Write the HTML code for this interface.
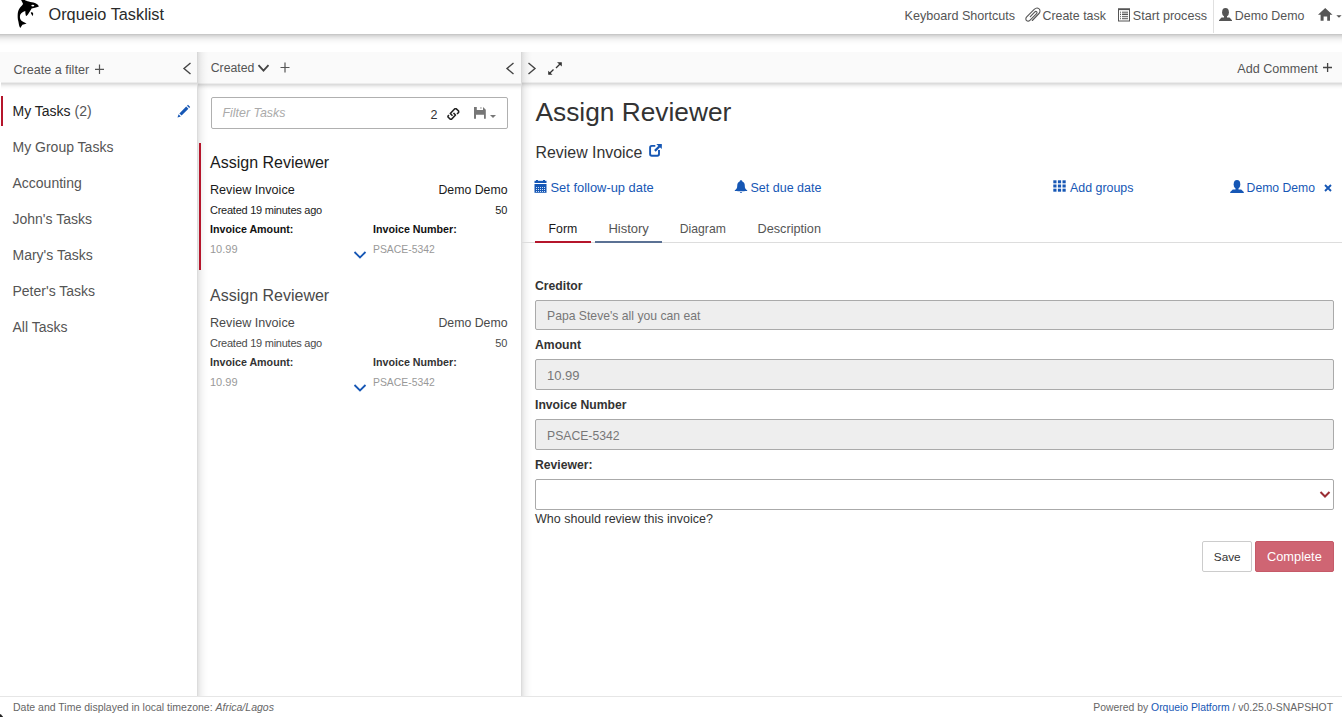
<!DOCTYPE html>
<html><head><meta charset="utf-8"><title>Orqueio Tasklist</title>
<style>
html,body{margin:0;padding:0;}
body{width:1342px;height:717px;position:relative;overflow:hidden;background:#fff;font-family:"Liberation Sans",sans-serif;}
.t{position:absolute;white-space:nowrap;line-height:1;}
svg{display:block;}
</style></head><body>
<div style="position:absolute;left:0px;top:0px;width:1342px;height:34px;background:#fff;"></div>
<div style="position:absolute;left:0px;top:34px;width:1342px;height:11px;background:linear-gradient(180deg,rgba(0,0,0,0.216) 0px 1px,rgba(0,0,0,0.165) 1px 2px,rgba(0,0,0,0.129) 2px 3px,rgba(0,0,0,0.098) 3px 4px,rgba(0,0,0,0.075) 4px 5px,rgba(0,0,0,0.051) 5px 6px,rgba(0,0,0,0.035) 6px 7px,rgba(0,0,0,0.024) 7px 8px,rgba(0,0,0,0.016) 8px 9px,rgba(0,0,0,0.008) 9px 10px,rgba(0,0,0,0.004) 10px 11px);"></div>
<svg style="position:absolute;left:14px;top:0px" width="28" height="30" viewBox="0 0 28 30"><path fill="#000" d="M7.1,0 L10.9,0 C12,1.2 17,2 20.9,2.9 C23,3.6 24.5,5 24.9,6.4 C23,7.2 21,7.6 17.6,8.4 C17,9.5 16,11 14.8,13 C13.8,14.8 13,15.8 12,15.9 C11.5,14.5 11.3,12.5 11.3,11 C9.5,11.3 7.5,12.5 6.2,14.8 C5.6,16.8 6,19.2 7.2,20.6 C8.4,21.8 10.5,22.6 12.6,23.4 C11,23.9 9.5,24.2 8.4,24.8 C7.6,25.8 6.9,27.2 6.3,28 C5.2,26.5 4.8,24 4.4,21.5 C3.5,19 3.6,15.5 3.8,13 C4.2,10.2 5.5,8 7,6.5 C8,5.5 9,4.5 9,3.8 C8.4,2.5 7.6,1 7.1,0 Z"/><ellipse cx="18.8" cy="5.6" rx="1.5" ry="0.9" fill="#fff"/><path fill="#000" d="M16.8,12.6 C17.6,12 18.8,12.2 19.1,13.2 C19.2,14.4 19,15.5 18.6,15.9 C17.8,15 17,13.8 16.8,12.6Z"/></svg>
<div class="t" style="left:48.5px;top:6px;font-size:16.3px;color:#2a2a2a;font-weight:normal;font-style:normal;">Orqueio Tasklist</div>
<div class="t" style="left:904.5px;top:10px;font-size:12.6px;color:#555;font-weight:normal;font-style:normal;">Keyboard Shortcuts</div>
<svg style="position:absolute;left:1024px;top:7px" width="18" height="16" viewBox="0 0 18 16"><path d="M8.3,13.5 L15,6.5 C16.5,5 16.2,2.5 14.8,1.6 C13.4,0.7 11.5,1.2 10.2,2.4 L2.7,9.9 C1.6,11 1.6,12.8 2.6,13.6 C3.6,14.4 5.2,14 6.1,13.1 L12.6,6.6 C13.2,6 13.2,5.1 12.5,4.6 C11.9,4.2 11.2,4.5 10.6,5.1 L6.3,9.6" fill="none" stroke="#555" stroke-width="1.1" stroke-linecap="round"/></svg>
<div class="t" style="left:1042.5px;top:10px;font-size:12.4px;color:#555;font-weight:normal;font-style:normal;">Create task</div>
<svg style="position:absolute;left:1117px;top:8px" width="14" height="14" viewBox="0 0 14 14"><rect x="1.5" y="1" width="11" height="12" fill="none" stroke="#555" stroke-width="1"/><rect x="1" y="0.5" width="12" height="1.6" fill="#555"/><g fill="#555"><rect x="3" y="3.7" width="1" height="1"/><rect x="5" y="3.7" width="6" height="1"/><rect x="3" y="5.7" width="1" height="1.4"/><rect x="5" y="5.6" width="6" height="1.5"/><rect x="3" y="8.2" width="1" height="1"/><rect x="5" y="8.2" width="6" height="1"/><rect x="3" y="10.2" width="1" height="1"/><rect x="5" y="10.2" width="6" height="1"/></g></svg>
<div class="t" style="left:1132.8px;top:10px;font-size:12.6px;color:#555;font-weight:normal;font-style:normal;">Start process</div>
<div style="position:absolute;left:1213px;top:0px;width:1px;height:33px;background:#e0e0e0;"></div>
<svg style="position:absolute;left:1219px;top:8px" width="13" height="13" viewBox="0 0 13 13"><ellipse cx="6.5" cy="4.3" rx="3.4" ry="4.3" fill="#555"/><rect x="5" y="6" width="3" height="4" fill="#555"/><path d="M0,13 L0,12.2 L2.5,9.6 L10.5,9.6 L13,12.2 L13,13 Z" fill="#555"/></svg>
<div class="t" style="left:1234.8px;top:10px;font-size:12.4px;color:#555;font-weight:normal;font-style:normal;">Demo Demo</div>
<svg style="position:absolute;left:1318px;top:8px" width="24" height="13" viewBox="0 0 24 13"><path d="M7.2,0 L14.5,6.8 L12,6.8 L12,12.8 L9.2,12.8 L9.2,8.6 L5.6,8.6 L5.6,12.8 L2.6,12.8 L2.6,6.8 L0,6.8 Z" fill="#555"/><path d="M18.3,7.2 L23.6,7.2 L21,9.8 Z" fill="#555"/></svg>
<div style="position:absolute;left:0px;top:52px;width:197px;height:30px;background:#fafafa;"></div>
<div style="position:absolute;left:1px;top:82px;width:196px;height:7px;background:linear-gradient(180deg,rgba(0,0,0,0.075) 0px 1px,rgba(0,0,0,0.137) 1px 2px,rgba(0,0,0,0.106) 2px 3px,rgba(0,0,0,0.067) 3px 4px,rgba(0,0,0,0.039) 4px 5px,rgba(0,0,0,0.020) 5px 6px,rgba(0,0,0,0.008) 6px 7px);"></div>
<div style="position:absolute;left:197px;top:52px;width:324px;height:31px;background:#fafafa;"></div>
<div style="position:absolute;left:198px;top:83px;width:323px;height:7px;background:linear-gradient(180deg,rgba(0,0,0,0.075) 0px 1px,rgba(0,0,0,0.137) 1px 2px,rgba(0,0,0,0.106) 2px 3px,rgba(0,0,0,0.067) 3px 4px,rgba(0,0,0,0.039) 4px 5px,rgba(0,0,0,0.020) 5px 6px,rgba(0,0,0,0.008) 6px 7px);"></div>
<div style="position:absolute;left:521px;top:52px;width:821px;height:30px;background:#fafafa;"></div>
<div style="position:absolute;left:522px;top:82px;width:820px;height:7px;background:linear-gradient(180deg,rgba(0,0,0,0.075) 0px 1px,rgba(0,0,0,0.137) 1px 2px,rgba(0,0,0,0.106) 2px 3px,rgba(0,0,0,0.067) 3px 4px,rgba(0,0,0,0.039) 4px 5px,rgba(0,0,0,0.020) 5px 6px,rgba(0,0,0,0.008) 6px 7px);"></div>
<div style="position:absolute;left:197px;top:52px;width:11px;height:644px;background:linear-gradient(90deg,rgba(0,0,0,0.137) 0px 1px,rgba(0,0,0,0.098) 1px 2px,rgba(0,0,0,0.078) 2px 3px,rgba(0,0,0,0.059) 3px 4px,rgba(0,0,0,0.047) 4px 5px,rgba(0,0,0,0.035) 5px 6px,rgba(0,0,0,0.027) 6px 7px,rgba(0,0,0,0.020) 7px 8px,rgba(0,0,0,0.012) 8px 9px,rgba(0,0,0,0.008) 9px 10px,rgba(0,0,0,0.004) 10px 11px);"></div>
<div style="position:absolute;left:521px;top:52px;width:11px;height:644px;background:linear-gradient(90deg,rgba(0,0,0,0.137) 0px 1px,rgba(0,0,0,0.098) 1px 2px,rgba(0,0,0,0.078) 2px 3px,rgba(0,0,0,0.059) 3px 4px,rgba(0,0,0,0.047) 4px 5px,rgba(0,0,0,0.035) 5px 6px,rgba(0,0,0,0.027) 6px 7px,rgba(0,0,0,0.020) 7px 8px,rgba(0,0,0,0.012) 8px 9px,rgba(0,0,0,0.008) 9px 10px,rgba(0,0,0,0.004) 10px 11px);"></div>
<div class="t" style="left:13.5px;top:64px;font-size:12.6px;color:#555;font-weight:normal;font-style:normal;">Create a filter</div>
<svg style="position:absolute;left:94px;top:64px" width="11" height="11" viewBox="0 0 11 11"><path d="M5.5,0.5 V10 M1,5.3 H10" stroke="#555" stroke-width="1.2"/></svg>
<svg style="position:absolute;left:182px;top:62px" width="10" height="13" viewBox="0 0 10 13"><path d="M8.5,1 L2,6.5 L8.5,12" fill="none" stroke="#444" stroke-width="1.4"/></svg>
<div style="position:absolute;left:1px;top:96px;width:2px;height:30px;background:#b5152b;"></div>
<div class="t" style="left:12.5px;top:104px;font-size:14px;color:#222;font-weight:normal;font-style:normal;">My Tasks <span style="color:#555">(2)</span></div>
<svg style="position:absolute;left:176px;top:103px" width="16" height="16" viewBox="0 0 16 16"><path d="M1.5,14.5 L2.6,11.2 L4.8,13.4 Z M3.4,10.4 L10.2,3.6 L12.4,5.8 L5.6,12.6 Z M11,2.8 L12,1.8 L14.2,4 L13.2,5 Z" fill="#1657b5"/></svg>
<div class="t" style="left:12.5px;top:140px;font-size:14px;color:#555;font-weight:normal;font-style:normal;">My Group Tasks</div>
<div class="t" style="left:12.5px;top:176px;font-size:14px;color:#555;font-weight:normal;font-style:normal;">Accounting</div>
<div class="t" style="left:12.5px;top:212px;font-size:14px;color:#555;font-weight:normal;font-style:normal;">John's Tasks</div>
<div class="t" style="left:12.5px;top:248px;font-size:14px;color:#555;font-weight:normal;font-style:normal;">Mary's Tasks</div>
<div class="t" style="left:12.5px;top:284px;font-size:14px;color:#555;font-weight:normal;font-style:normal;">Peter's Tasks</div>
<div class="t" style="left:12.5px;top:320px;font-size:14px;color:#555;font-weight:normal;font-style:normal;">All Tasks</div>
<div class="t" style="left:210.7px;top:62px;font-size:12.3px;color:#555;font-weight:normal;font-style:normal;">Created</div>
<svg style="position:absolute;left:257px;top:63px" width="13" height="10" viewBox="0 0 13 10"><path d="M1.5,2.2 L6.5,7.6 L11.5,2.2" fill="none" stroke="#444" stroke-width="1.8"/></svg>
<svg style="position:absolute;left:280px;top:62px" width="11" height="11" viewBox="0 0 11 11"><path d="M5,0.5 V10.5 M0.5,5.5 H9.5" stroke="#555" stroke-width="1.2"/></svg>
<svg style="position:absolute;left:505px;top:62px" width="10" height="13" viewBox="0 0 10 13"><path d="M8.5,1 L2,6.5 L8.5,12" fill="none" stroke="#444" stroke-width="1.4"/></svg>
<div style="position:absolute;left:211px;top:97px;width:295px;height:30px;border:1px solid #b0b0b0;border-radius:2px;background:#fff;"></div>
<div class="t" style="left:222.5px;top:107px;font-size:12.4px;color:#aaa;font-weight:normal;font-style:italic;">Filter Tasks</div>
<div class="t" style="left:430.5px;top:109px;font-size:12.5px;color:#333;font-weight:normal;font-style:normal;">2</div>
<svg style="position:absolute;left:444px;top:105px" width="18" height="18" viewBox="0 0 18 18"><path d="M8.5,10.8 L6.3,8.5 L10.8,3.8 L12.3,3.8 L14.6,6 L14.6,7.5 L13,9 M9.5,8 L11.5,10 L7.5,14.3 L6.3,14.3 L4,12 L4,11 L5,10.2" fill="none" stroke="#222" stroke-width="1.6" stroke-linejoin="round"/></svg>
<svg style="position:absolute;left:470px;top:104px" width="28" height="18" viewBox="0 0 28 18"><path d="M4,3 L13,3 L15.8,5.8 L15.8,14.7 L14,14.7 L14,10.8 L6,10.8 L6,14.7 L4,14.7 Z M6.8,3 L13,3 L13,6 L6.8,6 Z" fill="#777" fill-rule="evenodd"/><rect x="10" y="3.2" width="1.8" height="1.5" fill="#bbb"/><path d="M20,11 L26,11 L23,14 Z" fill="#777"/></svg>
<div style="position:absolute;left:199px;top:143px;width:2px;height:127px;background:#b5152b;"></div>
<div class="t" style="left:210px;top:155px;font-size:16px;color:#1a1a1a;font-weight:normal;font-style:normal;">Assign Reviewer</div>
<div class="t" style="left:210px;top:184px;font-size:12.6px;color:#1a1a1a;font-weight:normal;font-style:normal;">Review Invoice</div>
<div class="t" style="right:834.5px;top:184px;font-size:12.3px;color:#1a1a1a;font-weight:normal;font-style:normal;">Demo Demo</div>
<div class="t" style="left:210px;top:205px;font-size:11px;color:#1a1a1a;font-weight:normal;font-style:normal;letter-spacing:-0.25px;">Created 19 minutes ago</div>
<div class="t" style="right:834.5px;top:205px;font-size:11px;color:#1a1a1a;font-weight:normal;font-style:normal;">50</div>
<div class="t" style="left:210px;top:224px;font-size:10.7px;color:#111;font-weight:bold;font-style:normal;">Invoice Amount:</div>
<div class="t" style="left:373px;top:224px;font-size:10.7px;color:#111;font-weight:bold;font-style:normal;">Invoice Number:</div>
<div class="t" style="left:210px;top:244px;font-size:11px;color:#999;font-weight:normal;font-style:normal;">10.99</div>
<div class="t" style="left:373px;top:245px;font-size:10.4px;color:#999;font-weight:normal;font-style:normal;">PSACE-5342</div>
<svg style="position:absolute;left:353px;top:250px" width="14" height="10" viewBox="0 0 14 10"><path d="M1.5,2 L7,7.5 L12.5,2" fill="none" stroke="#1657b5" stroke-width="1.8"/></svg>
<div class="t" style="left:210px;top:288px;font-size:16px;color:#4a4a4a;font-weight:normal;font-style:normal;">Assign Reviewer</div>
<div class="t" style="left:210px;top:317px;font-size:12.6px;color:#4a4a4a;font-weight:normal;font-style:normal;">Review Invoice</div>
<div class="t" style="right:834.5px;top:317px;font-size:12.3px;color:#4a4a4a;font-weight:normal;font-style:normal;">Demo Demo</div>
<div class="t" style="left:210px;top:338px;font-size:11px;color:#4a4a4a;font-weight:normal;font-style:normal;letter-spacing:-0.25px;">Created 19 minutes ago</div>
<div class="t" style="right:834.5px;top:338px;font-size:11px;color:#4a4a4a;font-weight:normal;font-style:normal;">50</div>
<div class="t" style="left:210px;top:357px;font-size:10.7px;color:#333;font-weight:bold;font-style:normal;">Invoice Amount:</div>
<div class="t" style="left:373px;top:357px;font-size:10.7px;color:#333;font-weight:bold;font-style:normal;">Invoice Number:</div>
<div class="t" style="left:210px;top:377px;font-size:11px;color:#999;font-weight:normal;font-style:normal;">10.99</div>
<div class="t" style="left:373px;top:378px;font-size:10.4px;color:#999;font-weight:normal;font-style:normal;">PSACE-5342</div>
<svg style="position:absolute;left:353px;top:383px" width="14" height="10" viewBox="0 0 14 10"><path d="M1.5,2 L7,7.5 L12.5,2" fill="none" stroke="#1657b5" stroke-width="1.8"/></svg>
<svg style="position:absolute;left:527px;top:62px" width="10" height="13" viewBox="0 0 10 13"><path d="M1.5,1 L8,6.5 L1.5,12" fill="none" stroke="#444" stroke-width="1.4"/></svg>
<svg style="position:absolute;left:547px;top:61px" width="16" height="15" viewBox="0 0 16 15"><path d="M10,1.2 L14.8,1.2 L14.8,5.4 Z M1.2,9.7 L1.2,13.8 L5.5,13.8 Z" fill="#333"/><path d="M13.8,2.2 L9,7 M2.2,12.8 L6.5,8.5" stroke="#333" stroke-width="1.3"/></svg>
<div class="t" style="left:1237.3px;top:63px;font-size:12.6px;color:#555;font-weight:normal;font-style:normal;">Add Comment</div>
<svg style="position:absolute;left:1323px;top:63px" width="11" height="11" viewBox="0 0 11 11"><path d="M4.6,0 V9 M0,4.5 H9" stroke="#444" stroke-width="1.3"/></svg>
<div class="t" style="left:535.5px;top:99px;font-size:26.3px;color:#333;font-weight:normal;font-style:normal;">Assign Reviewer</div>
<div class="t" style="left:535.5px;top:145px;font-size:15.9px;color:#333;font-weight:normal;font-style:normal;">Review Invoice</div>
<svg style="position:absolute;left:644px;top:140px" width="24" height="22" viewBox="0 0 24 22"><path d="M11.3,5.9 L7.8,5.9 C6.5,5.9 6.1,6.4 6.1,7.7 L6.1,14 C6.1,15.3 6.5,15.7 7.8,15.7 L13.3,15.7 C14.6,15.7 15,15.3 15,14 L15,10" fill="none" stroke="#1657b5" stroke-width="1.9"/><path d="M12.3,4 L17.8,4 L17.8,9 Z" fill="#1657b5"/><path d="M16.8,5 L10.9,10.9" stroke="#1657b5" stroke-width="2.2"/></svg>
<svg style="position:absolute;left:534px;top:180px" width="13" height="13" viewBox="0 0 13 13"><rect x="0.5" y="0.8" width="12" height="2.2" fill="#1657b5"/><rect x="2" y="0" width="2" height="1" fill="#1657b5"/><rect x="9" y="0" width="2" height="1" fill="#1657b5"/><rect x="0.5" y="4" width="12" height="8.8" fill="#1657b5"/><g fill="#cfe0f5"><rect x="2" y="7" width="1" height="1"/><rect x="4" y="7" width="1" height="1"/><rect x="6" y="7" width="1" height="1"/><rect x="8" y="7" width="1" height="1"/><rect x="10" y="7" width="1" height="1"/><rect x="2" y="9" width="1" height="1"/><rect x="4" y="9" width="1" height="1"/><rect x="6" y="9" width="1" height="1"/><rect x="8" y="9" width="1" height="1"/><rect x="10" y="9" width="1" height="1"/><rect x="2" y="11" width="1" height="1"/><rect x="4" y="11" width="1" height="1"/><rect x="6" y="11" width="1" height="1"/><rect x="8" y="11" width="1" height="1"/><rect x="10" y="11" width="1" height="1"/></g></svg>
<div class="t" style="left:550.5px;top:182px;font-size:12.9px;color:#1657b5;font-weight:normal;font-style:normal;">Set follow-up date</div>
<svg style="position:absolute;left:734px;top:180px" width="14" height="14" viewBox="0 0 14 14"><path d="M7,0.3 C8,0.3 8.3,1 8.3,1.6 C10.3,2.2 10.8,4 10.8,6 C10.8,8.2 11.5,9.2 13.2,10.3 L13.2,10.9 L10.8,10.9 L10.4,11.3 L3.6,11.3 L3.2,10.9 L0.8,10.9 L0.8,10.3 C2.5,9.2 3.2,8.2 3.2,6 C3.2,4 3.7,2.2 5.7,1.6 C5.7,1 6,0.3 7,0.3 Z M5.9,12.2 L8.1,12.2 C8.1,12.9 7.6,13 7,13 C6.4,13 5.9,12.9 5.9,12.2 Z" fill="#1657b5"/></svg>
<div class="t" style="left:750.5px;top:182px;font-size:12.5px;color:#1657b5;font-weight:normal;font-style:normal;">Set due date</div>
<svg style="position:absolute;left:1053px;top:180px" width="13" height="12" viewBox="0 0 13 12"><g fill="#1657b5"><rect x="0.3" y="0.3" width="3.2" height="3"/><rect x="4.9" y="0.3" width="3.2" height="3"/><rect x="9.5" y="0.3" width="3.2" height="3"/><rect x="0.3" y="4.5" width="3.2" height="3"/><rect x="4.9" y="4.5" width="3.2" height="3"/><rect x="9.5" y="4.5" width="3.2" height="3"/><rect x="0.3" y="8.7" width="3.2" height="3"/><rect x="4.9" y="8.7" width="3.2" height="3"/><rect x="9.5" y="8.7" width="3.2" height="3"/></g></svg>
<div class="t" style="left:1070px;top:182px;font-size:12.4px;color:#1657b5;font-weight:normal;font-style:normal;">Add groups</div>
<svg style="position:absolute;left:1229.5px;top:180px" width="14" height="13" viewBox="0 0 14 13"><ellipse cx="7" cy="4.3" rx="3.3" ry="4.3" fill="#1657b5"/><rect x="5.5" y="6" width="3" height="4" fill="#1657b5"/><path d="M0.2,13 L0.2,12 L2.8,9.6 L11.2,9.6 L13.8,12 L13.8,13 Z" fill="#1657b5"/></svg>
<div class="t" style="left:1246.6px;top:182px;font-size:12.2px;color:#1657b5;font-weight:normal;font-style:normal;">Demo Demo</div>
<svg style="position:absolute;left:1323.5px;top:183.5px" width="8" height="8" viewBox="0 0 8 8"><path d="M1,1 L7,7 M7,1 L1,7" stroke="#1657b5" stroke-width="1.9"/></svg>
<div style="position:absolute;left:521px;top:242px;width:821px;height:1px;background:#ddd;"></div>
<div style="position:absolute;left:535px;top:241px;width:56px;height:2px;background:#b5152b;"></div>
<div style="position:absolute;left:595px;top:241px;width:67px;height:2px;background:#5b7194;"></div>
<div class="t" style="left:548.6px;top:223px;font-size:12.3px;color:#1a1a1a;font-weight:normal;font-style:normal;">Form</div>
<div class="t" style="left:608.4px;top:222px;font-size:13px;color:#555;font-weight:normal;font-style:normal;">History</div>
<div class="t" style="left:679.8px;top:223px;font-size:12.2px;color:#555;font-weight:normal;font-style:normal;">Diagram</div>
<div class="t" style="left:757.5px;top:223px;font-size:12.7px;color:#555;font-weight:normal;font-style:normal;">Description</div>
<div class="t" style="left:535px;top:280px;font-size:12.2px;color:#333;font-weight:bold;font-style:normal;">Creditor</div>
<div style="position:absolute;left:535px;top:300px;width:797px;height:28px;background:#eee;border:1px solid #aaa;border-radius:2px;"></div>
<div class="t" style="left:547px;top:310px;font-size:12.2px;color:#777;font-weight:normal;font-style:normal;">Papa Steve's all you can eat</div>
<div class="t" style="left:535px;top:339px;font-size:12.2px;color:#333;font-weight:bold;font-style:normal;">Amount</div>
<div style="position:absolute;left:535px;top:359px;width:797px;height:29px;background:#eee;border:1px solid #aaa;border-radius:2px;"></div>
<div class="t" style="left:547px;top:369px;font-size:13px;color:#777;font-weight:normal;font-style:normal;">10.99</div>
<div class="t" style="left:535px;top:399px;font-size:12.2px;color:#333;font-weight:bold;font-style:normal;">Invoice Number</div>
<div style="position:absolute;left:535px;top:419px;width:797px;height:29px;background:#eee;border:1px solid #aaa;border-radius:2px;"></div>
<div class="t" style="left:547px;top:430px;font-size:12.2px;color:#777;font-weight:normal;font-style:normal;">PSACE-5342</div>
<div class="t" style="left:535px;top:459px;font-size:12.2px;color:#333;font-weight:bold;font-style:normal;">Reviewer:</div>
<div style="position:absolute;left:535px;top:479px;width:797px;height:29px;background:#fff;border:1px solid #aaa;border-radius:2px;"></div>
<svg style="position:absolute;left:1319px;top:490px" width="12" height="9" viewBox="0 0 12 9"><path d="M1.5,2 L6,6.5 L10.5,2" fill="none" stroke="#9b2d34" stroke-width="2"/></svg>
<div class="t" style="left:535px;top:513px;font-size:12.5px;color:#333;font-weight:normal;font-style:normal;">Who should review this invoice?</div>
<div style="position:absolute;left:1202px;top:541px;width:48px;height:29px;background:#fff;border:1px solid #ccc;border-radius:2px;"></div>
<div class="t" style="left:1213.8px;top:552px;font-size:11.8px;color:#333;font-weight:normal;font-style:normal;">Save</div>
<div style="position:absolute;left:1255px;top:541px;width:77px;height:29px;background:#cf6573;border:1px solid #c65a68;border-radius:2px;"></div>
<div class="t" style="left:1267px;top:551px;font-size:12.8px;color:#fff;font-weight:normal;font-style:normal;">Complete</div>
<div style="position:absolute;left:0px;top:696px;width:1342px;height:1px;background:#e6e6e6;"></div>
<div style="position:absolute;left:0px;top:697px;width:1342px;height:20px;background:#fff;"></div>
<div class="t" style="left:13px;top:702px;font-size:10.5px;color:#666;font-weight:normal;font-style:normal;">Date and Time displayed in local timezone: <i>Africa/Lagos</i></div>
<div class="t" style="right:9px;top:703px;font-size:10.4px;color:#666;font-weight:normal;font-style:normal;">Powered by <span style="color:#1657b5">Orqueio Platform</span> / v0.25.0-SNAPSHOT</div>
<svg style="position:absolute;left:0px;top:714px" width="5" height="3" viewBox="0 0 5 3"><path d="M0,0 L0.9,0.5 L2.9,2.4 L2.9,3 L0,3 Z" fill="#222"/></svg>
</body></html>
